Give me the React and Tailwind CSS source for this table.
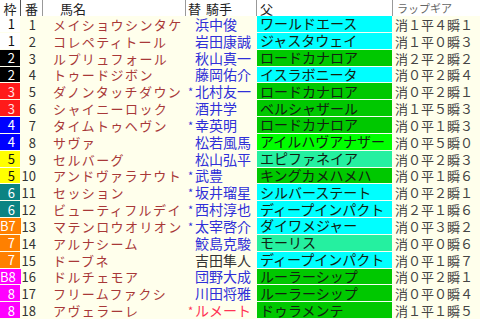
import React from 'react'

const FRAME = {
  1: 'bg-white text-[#111]',
  2: 'bg-black text-white',
  3: 'bg-[#ff1a1a] text-[#ffe0e0]',
  4: 'bg-[#0000ff] text-white',
  5: 'bg-[#ffff00] text-[#111]',
  6: 'bg-[#0b8383] text-white',
  7: 'bg-[#ff8000] text-white',
  8: 'bg-[#ff00ff] text-white',
}

const SIRE = {
  cyan: 'bg-[#00ffff]',
  green: 'bg-[#00c800]',
  lime: 'bg-[#00ff00]',
  mint: 'bg-[#25f0a0]',
}

const rows = [
  { w: 1, wl: '1', n: 1, name: 'メイショウシンタケ', star: false, jockey: '浜中俊', jc: 'blue', sire: 'ワールドエース', sc: 'cyan', lap: '消１平４瞬１' },
  { w: 1, wl: '1', n: 2, name: 'コレペティトール', star: false, jockey: '岩田康誠', jc: 'blue', sire: 'ジャスタウェイ', sc: 'cyan', lap: '消１平０瞬３' },
  { w: 2, wl: '2', n: 3, name: 'ルプリュフォール', star: false, jockey: '秋山真一', jc: 'blue', sire: 'ロードカナロア', sc: 'green', lap: '消２平２瞬２' },
  { w: 2, wl: '2', n: 4, name: 'トゥードジボン', star: false, jockey: '藤岡佑介', jc: 'blue', sire: 'イスラボニータ', sc: 'cyan', lap: '消０平２瞬４' },
  { w: 3, wl: '3', n: 5, name: 'ダノンタッチダウン', star: true, jockey: '北村友一', jc: 'blue', sire: 'ロードカナロア', sc: 'green', lap: '消０平２瞬１' },
  { w: 3, wl: '3', n: 6, name: 'シャイニーロック', star: false, jockey: '酒井学', jc: 'blue', sire: 'ベルシャザール', sc: 'green', lap: '消１平５瞬３' },
  { w: 4, wl: '4', n: 7, name: 'タイムトゥヘヴン', star: true, jockey: '幸英明', jc: 'blue', sire: 'ロードカナロア', sc: 'green', lap: '消０平１瞬３' },
  { w: 4, wl: '4', n: 8, name: 'サヴァ', star: false, jockey: '松若風馬', jc: 'blue', sire: 'アイルハヴアナザー', sc: 'lime', lap: '消０平５瞬０' },
  { w: 5, wl: '5', n: 9, name: 'セルバーグ', star: false, jockey: '松山弘平', jc: 'blue', sire: 'エピファネイア', sc: 'mint', lap: '消０平２瞬３' },
  { w: 5, wl: '5', n: 10, name: 'アンドヴァラナウト', star: true, jockey: '武豊', jc: 'blue', sire: 'キングカメハメハ', sc: 'green', lap: '消０平１瞬６' },
  { w: 6, wl: '6', n: 11, name: 'セッション', star: true, jockey: '坂井瑠星', jc: 'blue', sire: 'シルバーステート', sc: 'cyan', lap: '消０平２瞬１' },
  { w: 6, wl: '6', n: 12, name: 'ビューティフルデイ', star: true, jockey: '西村淳也', jc: 'blue', sire: 'ディープインパクト', sc: 'cyan', lap: '消２平１瞬６' },
  { w: 7, wl: 'B7', n: 13, name: 'マテンロウオリオン', star: true, jockey: '太宰啓介', jc: 'blue', sire: 'ダイワメジャー', sc: 'cyan', lap: '消０平３瞬２' },
  { w: 7, wl: '7', n: 14, name: 'アルナシーム', star: false, jockey: '鮫島克駿', jc: 'blue', sire: 'モーリス', sc: 'mint', lap: '消０平０瞬６' },
  { w: 7, wl: '7', n: 15, name: 'ドーブネ', star: false, jockey: '吉田隼人', jc: 'dark', sire: 'ディープインパクト', sc: 'cyan', lap: '消０平１瞬７' },
  { w: 8, wl: 'B8', n: 16, name: 'ドルチェモア', star: false, jockey: '団野大成', jc: 'blue', sire: 'ルーラーシップ', sc: 'green', lap: '消０平２瞬１' },
  { w: 8, wl: '8', n: 17, name: 'フリームファクシ', star: false, jockey: '川田将雅', jc: 'blue', sire: 'ルーラーシップ', sc: 'green', lap: '消０平０瞬４' },
  { w: 8, wl: '8', n: 18, name: 'アヴェラーレ', star: true, jockey: 'ルメート', jc: 'red', sire: 'ドゥラメンテ', sc: 'green', lap: '消１平１瞬５' },
]

const JOCKEY = {
  blue: 'text-[#3030d8]',
  dark: 'text-[#333]',
  red: 'text-[#ff3355]',
}

const App = () => {
  return (
    <div
      className="w-[480px] h-[319px] overflow-hidden bg-[#ffffec] grid grid-cols-[21px_22px_143px_71px_136px_87px] grid-rows-[16px_repeat(18,minmax(0,1fr))] leading-[15px]"
      style={{ fontFamily: '"Noto Sans CJK JP", "Noto Sans", sans-serif' }}
    >
      {/* header */}
      <div className="bg-white border-r border-[#555] flex items-center justify-center text-[13px] text-[#222]">枠</div>
      <div className="bg-white border-r border-[#999] flex items-center justify-center text-[13px] text-[#222]">番</div>
      <div className="bg-white border-r border-[#999] flex items-center pl-[17px] text-[13px] text-[#222]">馬名</div>
      <div className="bg-white border-r border-[#999] flex items-center pl-[2px] text-[13px] text-[#222]">
        <span>替</span>
        <span className="ml-[5px]">騎手</span>
      </div>
      <div className="bg-white border-r border-[#999] flex items-center pl-[3px] text-[13px] text-[#222]">父</div>
      <div className="bg-white flex items-center pl-[4px] text-[11px] text-[#666]">ラップギア</div>

      {rows.map((r) => (
        <React.Fragment key={r.n}>
          <div className="pr-[1px] border-b border-[#ffffec] flex">
            <div className={`flex-1 flex items-center justify-end pr-[5px] text-[13px] ${FRAME[r.w]}`}>
              {r.wl}
            </div>
          </div>
          <div className="flex items-center justify-end pr-[7px] text-[13px] text-[#333]">{r.n}</div>
          <div className="flex items-center pl-[10px] text-[13px] tracking-[1.4px] text-[#a83838] whitespace-nowrap">
            {r.name}
          </div>
          <div className={`flex items-center pl-[2px] text-[14px] whitespace-nowrap ${JOCKEY[r.jc]}`}>
            <span className="w-[7px] text-[11px]">{r.star ? '*' : ''}</span>
            <span>{r.jockey}</span>
          </div>
          <div className={`flex items-center pl-[3px] mr-[1px] border-b border-[#f4fff4] text-[14px] text-[#112211] whitespace-nowrap ${SIRE[r.sc]}`}>
            {r.sire}
          </div>
          <div className="flex items-center pl-[2px] text-[13px] text-[#444] whitespace-nowrap">{r.lap}</div>
        </React.Fragment>
      ))}
    </div>
  )
}

export default App
